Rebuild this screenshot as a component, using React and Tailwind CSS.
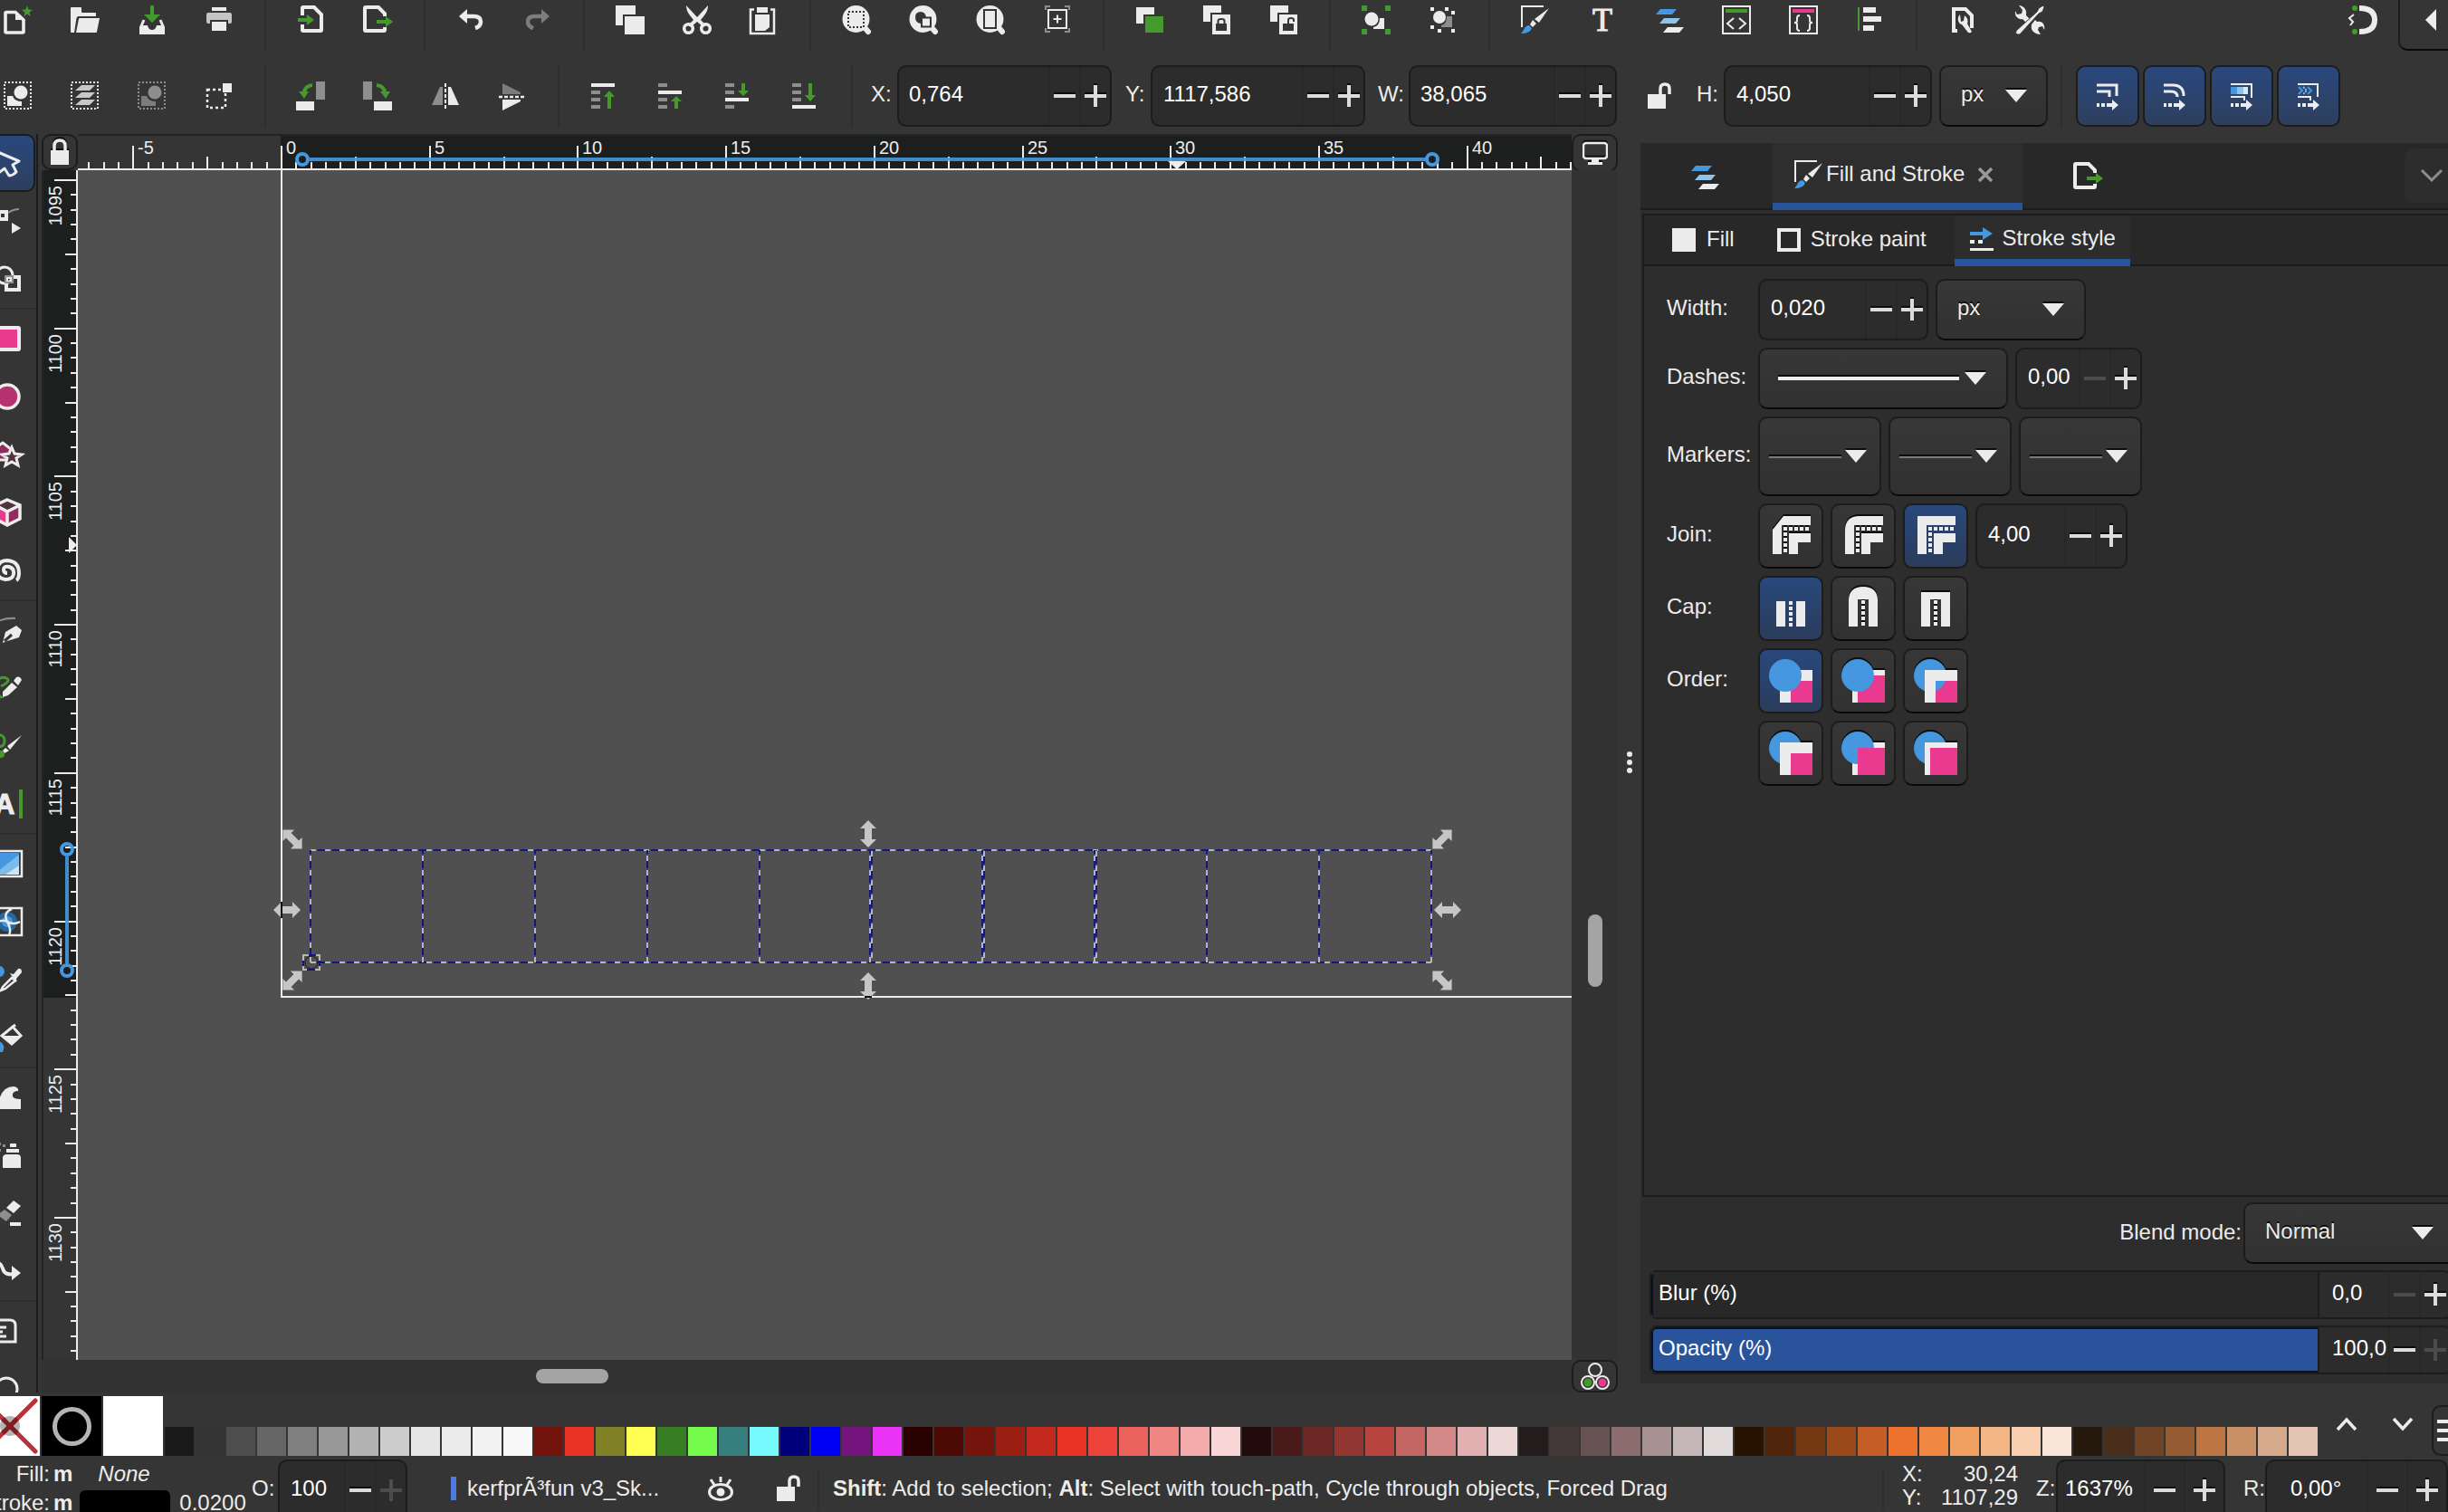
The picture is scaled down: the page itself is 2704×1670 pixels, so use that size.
import React from "react";

const W = "#ececec";
const G = "#8e8e8e";
const GR = "#459a2c";
const B = "#4598e0";
const P = "#ea3a8f";
const BG = "#353535";

function Svg({ children, size = "size-8", box = 32 }) {
  return (
    <svg viewBox={`0 0 ${box} ${box}`} className={`${size} shrink-0 overflow-visible`} fill="none" aria-hidden="true">
      {children}
    </svg>
  );
}

const magnifier = (
  <>
    <circle cx="15.5" cy="15" r="15" fill={W} />
    <path d="M23 22L29 29" stroke={W} strokeWidth="6" strokeLinecap="round" />
  </>
);

const strip = (y, arrow) =>
  [2, 10, 18, 26]
    .map((v) => <rect key={v} x="1" y={v} width={v === y ? 26 : 10} height="4" fill={v === y ? W : G} />)
    .concat(<path key="a" d={arrow} fill={GR} />);

const icons = {
  new: (
    <>
      <path d="M2 8.5q0-1 1-1H13L22 16V29q0 1-1 1H3q-1 0-1-1z" stroke={W} strokeWidth="3.6" />
      <path d="M13 7v9h10z" fill={W} />
      <path d="M26 0l1.6 4.6 4.4.2-3.5 3 1.2 4.4-3.7-2.6-3.7 2.6 1.2-4.4-3.5-3 4.4-.2z" fill={GR} />
    </>
  ),
  open: (
    <>
      <path d="M0 3q0-1 1-1h10q1 0 1 1v4q0 1 1 1h14q1 0 1 1v3H9q-2 0-2.5 2L4 30H1q-1 0-1-1z" fill={W} />
      <path d="M9 15q0-1 1-1h22l-3 15q0 1-1 1H6z" fill={W} />
    </>
  ),
  save: (
    <>
      <path d="M14 0h4v10h7l-9 9-9-9h7z" fill={GR} />
      <path d="M7 16L3.5 24V30.5H28.5V24L25 16" stroke={W} strokeWidth="3" />
      <path d="M3 22h8q1 5 5 5t5-5h8v9H3z" fill={W} />
    </>
  ),
  print: (
    <>
      <path d="M8 2h16v4H8zM8 18h16v10H8z" fill={W} />
      <path d="M2 10q0-2 2-2h24q2 0 2 2v8q0 2-2 2h-2v-4H6v4H4q-2 0-2-2z" fill="#c4c4c4" />
    </>
  ),
  import: (
    <>
      <path d="M6 11V3q0-1 1-1h12l8 8v17q0 1-1 1H7q-1 0-1-1v-6" stroke={W} strokeWidth="4" />
      <path d="M1 14h10V10l8 6-8 6v-4H1z" fill={GR} />
    </>
  ),
  export: (
    <>
      <path d="M23 12V9l-7-7H2Q1 2 1 3v24q0 1 1 1h20q1 0 1-1v-3" stroke={W} strokeWidth="4" />
      <path d="M14 16h10v-4l8 6-8 6v-4H14z" fill={GR} />
    </>
  ),
  undo: (
    <>
      <path d="M3 12l9-8v16z" fill={W} />
      <path d="M11 12h8q8 0 8 6 0 5-6 7" stroke={W} strokeWidth="4.5" />
    </>
  ),
  redo: (
    <>
      <path d="M29 12l-9-8v16z" fill="#7d7d7d" />
      <path d="M21 12h-8q-8 0-8 6 0 5 6 7" stroke="#7d7d7d" strokeWidth="4.5" />
    </>
  ),
  copy: (
    <>
      <path d="M0 0h22v10H8v12H0z" fill={W} />
      <path d="M10 12h22v20H10z" fill={W} />
    </>
  ),
  cut: (
    <>
      <path d="M4 0q0 6 4 11l4 5-6 6 3 2 7-6 7 6 3-2-6-6 4-5q4-5 4-11L16 13z" fill={W} />
      <circle cx="6.5" cy="25.5" r="4.8" stroke={W} strokeWidth="3.5" />
      <circle cx="25.5" cy="25.5" r="4.8" stroke={W} strokeWidth="3.5" />
    </>
  ),
  paste: (
    <>
      <path d="M5 4.5H1V31H27V4.5H23" stroke={W} strokeWidth="2.5" />
      <path d="M8 2h12v6H8zM6 10h16v14l-5 4H6z" fill={W} />
    </>
  ),
  zoomSel: (
    <>
      {magnifier}
      <rect x="7" y="7" width="17" height="17" stroke={BG} strokeWidth="2" strokeDasharray="2 2" />
    </>
  ),
  zoomDraw: (
    <>
      {magnifier}
      <path d="M13 20q-6-1-6-7t6-6q5 0 6 6h-5v7z" fill={BG} />
      <path d="M14 13.500h10v10H14z" fill={W} stroke={BG} strokeWidth="2" />
    </>
  ),
  zoomPage: (
    <>
      {magnifier}
      <path d="M9 5h13v20H9z" stroke={BG} strokeWidth="2" />
    </>
  ),
  zoomCenter: (
    <>
      <path d="M3 5V1h5M24 1h5v4M29 25v4h-5M8 29H3v-4" stroke={G} strokeWidth="2" />
      <path d="M6 5h20v20H6zM16 10.500v9M11.500 15h9" stroke={W} strokeWidth="2" />
    </>
  ),
  dup: (
    <>
      <path d="M1 2h20v8H9v10H1z" fill={W} />
      <path d="M11 12h20v18H11z" fill={GR} />
    </>
  ),
  clone: (
    <>
      <path d="M1 0h20v8H9v10H1zM11 10h20v22H11z" fill={W} />
      <path d="M15 20h12v8H15z" fill={BG} />
      <path d="M17.500 20v-3q0-2 3.500-2t3.500 2v3" stroke={BG} strokeWidth="2" />
    </>
  ),
  unclone: (
    <>
      <path d="M1 0h20v8H9v10H1zM11 10h20v22H11z" fill={W} />
      <path d="M15 20h12v8H15z" fill={BG} />
      <path d="M21 20v-4q0-2 3-2t3 2v2" stroke={BG} strokeWidth="2" />
    </>
  ),
  group: (
    <>
      <path d="M0 0h6v6H0zM26 0h6v6h-6zM0 26h6v6H0zM26 26h6v6h-6z" fill={GR} />
      <circle cx="11" cy="15" r="7.5" fill={W} />
      <path d="M20 14h5v12H13v-2q7-1 7-10z" fill={W} />
    </>
  ),
  ungroup: (
    <>
      <path d="M2 2h4v4H2zM18 2h4v4h-4zM2 22h4v4H2zM25 6h4v4h-4zM25 26h4v4h-4zM10 26h4v4h-4z" fill={W} />
      <circle cx="12" cy="13" r="7" fill={W} />
      <path d="M20 12h6v12H14v-2q6-1 6-10z" fill={G} />
    </>
  ),
  brush: (
    <>
      <path d="M1 24V1h24" stroke={W} strokeWidth="2" />
      <path d="M13 16l4 4-4 4-3-3z" fill={W} />
      <path d="M31 3L20 19l-5-4z" fill={W} />
      <path d="M9 22l3 3q-2 6-12 6 3-3 4-6 2-3 5-3z" fill={B} />
    </>
  ),
  text: (
    <text x="16" y="28" textAnchor="middle" fill={W} stroke={W} strokeWidth="1" fontSize="36" fontFamily="Liberation Serif, serif">
      T
    </text>
  ),
  layers: (
    <>
      <path d="M6 4h18l-5 6H1z" fill={B} />
      <path d="M10 14h18l-5 6H5z" fill="#8fc3ea" />
      <path d="M14 24h18l-5 6H9z" fill={W} />
    </>
  ),
  xml: (
    <>
      <path d="M1 1h30v30H1z" stroke={W} strokeWidth="2" />
      <path d="M4 4h24v4H4z" fill={GR} />
      <path d="M13 14l-7 6 7 6M19 14l7 6-7 6" stroke={W} strokeWidth="2" />
    </>
  ),
  css: (
    <>
      <path d="M1 1h30v30H1z" stroke={W} strokeWidth="2" />
      <path d="M4 4h24v4H4z" fill={P} />
      <path d="M12 11q-3 0-3 3v3q0 2-3 2 3 0 3 2v4q0 3 3 3M20 11q3 0 3 3v3q0 2 3 2-3 0-3 2v4q0 3-3 3" stroke={W} strokeWidth="2" />
    </>
  ),
  align: (
    <>
      <path d="M2 2h2v26H2z" fill={GR} />
      <path d="M8 2h14v6H8zM8 12h20v6H8zM8 22h12v6H8z" fill={W} />
    </>
  ),
  docPrefs: (
    <>
      <path d="M10 28H6V4h13l7 7v14" stroke={W} strokeWidth="4" />
      <path d="M13 10q-4 4-1 9 1 2 3 2l7 9q3 1 4-1l-5-9q2-5-3-9l-1 6-3 1z" fill={W} />
    </>
  ),
  prefs: (
    <>
      <path d="M4 0l4 5-1 4-5 1-2-4q-1 5 3 8 3 2 5 1l4 4 4-4-4-4q1-4-1-7Q8 0 4 0zM18 21q-1 5 2 8 3 3 8 3l-3-5 1-3 4-1 2 4q1-5-2-8-3-2-6-1l-2-2z" fill={W} />
      <path d="M31 0l-5 3-2 4L1 28q-1 3 1 4h3L26 9l4-2 2-5z" fill={W} stroke={BG} strokeWidth="1" />
    </>
  ),
  snap: (
    <>
      <path d="M14 3q17 0 17 13T14 29" stroke={W} strokeWidth="6" />
      <circle cx="9" cy="3" r="3" fill={GR} />
      <circle cx="9" cy="29" r="3" fill={GR} />
      <path d="M8 10l-5 4 4 4-3 4" stroke={W} strokeWidth="2" />
    </>
  ),
  selAll: (
    <>
      <path d="M1 1h29v29H1z" stroke={W} strokeWidth="2" strokeDasharray="2 2" />
      <circle cx="19" cy="12" r="7.5" fill={W} />
      <path d="M4 16h6q2 6 10 6v5H4z" fill={W} />
    </>
  ),
  selLayers: (
    <>
      <path d="M1 1h29v29H1z" stroke={W} strokeWidth="2" strokeDasharray="2 2" />
      <path d="M12 4h15l-6 6H5zM12 12h15l-6 6H5zM12 20h15l-6 6H5z" fill="#c8c8c8" />
    </>
  ),
  deselect: (
    <>
      <path d="M1 1h29v29H1z" stroke={G} strokeWidth="2" strokeDasharray="2 2" />
      <circle cx="19" cy="12" r="7.5" fill={G} />
      <path d="M4 16h6q2 6 10 6v5H4z" fill="#7c7c7c" />
    </>
  ),
  touch: (
    <>
      <path d="M3 9h20v20H3z" stroke={W} strokeWidth="2.5" strokeDasharray="3 3" />
      <path d="M20 2h10v10H20z" fill={W} />
    </>
  ),
  ccw: (
    <>
      <path d="M21 0h10v20H21z" fill={G} />
      <path d="M-1 22h20v10H-1z" fill={W} />
      <path d="M17 4q-9 1-9 9" stroke={GR} strokeWidth="4" />
      <path d="M2 11h11l-5 8z" fill={GR} />
    </>
  ),
  cw: (
    <>
      <path d="M-1 0h10v20H-1z" fill={G} />
      <path d="M11 22h20v10H11z" fill={W} />
      <path d="M14 4q9 1 9 9" stroke={GR} strokeWidth="4" />
      <path d="M18 11h11l-5 8z" fill={GR} />
    </>
  ),
  flipH: (
    <>
      <path d="M1 26L10 6h3v20z" fill={G} />
      <path d="M16 2v28" stroke={W} strokeWidth="2" strokeDasharray="4 2" />
      <path d="M19 6h3l9 20H19z" fill={W} />
    </>
  ),
  flipV: (
    <>
      <path d="M5 2l20 10v2H5z" fill="#7c7c7c" />
      <path d="M1 17h28" stroke={W} strokeWidth="2.5" strokeDasharray="4 2" />
      <path d="M5 20h20v2L5 32z" fill={W} />
    </>
  ),
  toTop: strip(2, "M21 10l6 7h-4v13h-4V17h-4z"),
  raise: strip(10, "M21 16l6 6h-4v8h-4v-8h-4z"),
  lower: strip(18, "M19 2h4v8h4l-6 6-6-6h4z"),
  toBottom: strip(26, "M19 2h4v13h4l-6 7-6-7h4z"),
  unlock: (
    <>
      <path d="M3 14h20v16H3z" fill={W} />
      <path d="M17 14V8q0-5 5-5t5 5v6" stroke={W} strokeWidth="3.5" />
    </>
  ),
};

const movers = {
  stroke: <path d="M4 4h22v12M4 11h14v6" stroke={W} strokeWidth="3" />,
  corner: <path d="M4 4h10q12 0 12 12M4 11h8q7 0 7 6" stroke={W} strokeWidth="3" />,
  gradient: (
    <>
      <path d="M4 3h23v15M4 17h15v4" stroke={W} strokeWidth="2" />
      <path d="M4 6h7v8H4z" fill={B} />
      <path d="M11 6h7v8h-7z" fill="#8fc3ea" />
      <path d="M18 6h5v8h-5z" fill="#d5e8f6" />
    </>
  ),
  pattern: (
    <>
      <path d="M4 3h22v14M4 17h14v4" stroke={W} strokeWidth="2" />
      <path d="M5 6l4 4-4 4M15 6l4 4-4 4" stroke={B} strokeWidth="2" />
      <path d="M10 6l4 4-4 4" stroke="#8fc3ea" strokeWidth="2" strokeDasharray="2 1" />
    </>
  ),
};

const toolIcons = {
  select: <path d="M2 2L30 14l-7 4 4 8q-4 4-8 4l-5-8-8 6z" stroke={W} strokeWidth="3" strokeLinejoin="round" />,
  node: (
    <>
      <path d="M18 7q6-4 12-4" stroke={G} strokeWidth="2" />
      <path d="M8 6h8v8H8z" stroke={W} strokeWidth="4" />
      <path d="M22 18l10 6-10 6z" fill={W} />
    </>
  ),
  shape: (
    <>
      <circle cx="14" cy="12" r="9" stroke={W} strokeWidth="3" />
      <path d="M16 14h14v14H16z" stroke={W} strokeWidth="4" />
      <path d="M15 13h8v7h-8z" stroke={G} strokeWidth="2" />
    </>
  ),
  rect: <rect x="-4" y="4" width="34" height="24" rx="1" fill={P} stroke={W} strokeWidth="4" />,
  ellipse: <circle cx="17" cy="16" r="13" fill="#b5316f" stroke={W} strokeWidth="3.5" />,
  star: (
    <>
      <path d="M12 3l9 7-4 12H2V10z" fill="#8f2d60" stroke={W} strokeWidth="3" />
      <path d="M22 8l3 7 8 1-6 4 2 8-7-4-7 4 2-8-6-4 8-1z" fill="#553041" stroke={W} strokeWidth="3" />
    </>
  ),
  cube: (
    <>
      <path d="M17 2l14 6v15l-14 7L4 23V8z" fill="#553041" />
      <path d="M4 8l13 7v15L4 23z" fill={P} />
      <path d="M31 8l-14 7v15l14-7z" fill="#8f2d60" />
      <path d="M17 2l14 6v15l-14 7L4 23V8zM4 8l13 7 14-7M17 15v15" stroke={W} strokeWidth="3.5" />
    </>
  ),
  spiral: <path d="M17 19q-4 0-4-4t6-3q6 2 5 8t-9 6q-10-1-9-11T17 5q13 1 13 14 0 6-3 8" stroke={W} strokeWidth="4" />,
  pen: (
    <>
      <path d="M2 9Q12 2 26 3" stroke={G} strokeWidth="2" />
      <path d="M12 30l3-12 12-7 6 5-3 8-13 4z" fill={W} />
      <path d="M14 28l8-7" stroke={BG} strokeWidth="3" />
    </>
  ),
  pencil: (
    <>
      <path d="M4 10q6-8 12-5t-6 9" stroke={GR} strokeWidth="3" />
      <path d="M12 20l10-10 6 5-10 9-6 2zM24 8l3-4q4-2 6 3l-4 6z" fill={W} />
      <path d="M4 28l4-6 5 5z" fill={GR} />
    </>
  ),
  calligraphy: (
    <>
      <path d="M2 4q12-2 12 6t-8 6" stroke={GR} strokeWidth="3" />
      <path d="M33 4L17 16l3 4zM15 18l4 3-5 3-2-3z" fill={W} />
      <circle cx="10" cy="25" r="4" fill={GR} />
    </>
  ),
  text: (
    <>
      <text x="3" y="27" fill={W} stroke={W} strokeWidth="1" fontSize="31" fontWeight="bold" fontFamily="Liberation Sans, sans-serif">
        A
      </text>
      <path d="M30 0h4v32h-4z" fill={GR} />
    </>
  ),
  gradient: (
    <>
      <path d="M-4 2h37v28H-4z" stroke={W} strokeWidth="2.5" />
      <path d="M-2 4h32v24H-2z" fill={B} />
      <path d="M30 6v22H2z" fill="#7dbbe9" />
      <path d="M30 18v10H15z" fill="#cfe4f4" />
    </>
  ),
  mesh: (
    <>
      <path d="M-4 1h37v30H-4z" stroke={W} strokeWidth="2.5" />
      <circle cx="17" cy="16" r="11" fill="#27679f" />
      <circle cx="17" cy="16" r="6" fill={B} />
      <path d="M22 2q-10 4-5 14t2 14M2 20q8-8 15-4t14 0" stroke={W} strokeWidth="2.5" />
    </>
  ),
  dropper: (
    <>
      <circle cx="8" cy="7" r="6" fill={B} />
      <path d="M10 28l2-4 10-10 4 3-11 9z" stroke={W} strokeWidth="2.5" />
      <path d="M20 9l4 1 5-6q4-1 4 4l-6 7v4z" fill={W} />
    </>
  ),
  bucket: (
    <>
      <path d="M11 14L23 4l9 10-10 9zM23 4l3-2" stroke={W} strokeWidth="3" />
      <path d="M11 14h21l-10 10z" fill={W} />
      <path d="M8 20q8 4 4 12H2z" fill={B} />
    </>
  ),
  tweak: <path d="M-4 29q8-1 12-10 4-15 16-15 6 1 5 5-7 0-6 6 1 3 9 3v11z" fill={W} />,
  spray: (
    <>
      <path d="M20 3h7v4h-7zM16 9h14v4H16zM12 18q1-3 4-3h12q4 0 4 4v11H12z" fill={W} />
      <path d="M7 2h3v3H7zM12 4h3v3h-3zM7 9h3v3H7zM2 5h3v3H2z" fill={G} />
    </>
  ),
  eraser: (
    <>
      <path d="M16 10l8-8 8 6-8 8z" fill={W} />
      <path d="M14 12l8 6-6 7-10-7z" fill={G} />
      <path d="M20 26h12v4H20z" fill={W} />
    </>
  ),
  connector: (
    <>
      <path d="M-2 5q12 0 14 8t12 6" stroke={W} strokeWidth="4" />
      <path d="M22 10l10 8-10 8z" fill={W} />
    </>
  ),
  pages: <path d="M-2 4h22q6 0 6 6v18H-2M-2 12h18M-2 17h14M-2 22h18" stroke={W} strokeWidth="3" />,
  zoom: <circle cx="16" cy="16" r="12" stroke={W} strokeWidth="3" />,
};

const Minus = ({ off }) => (
  <svg viewBox="0 0 24 24" className={off ? "size-6 shrink-0" : "size-6 shrink-0 drop-shadow-[0_-2px_0_#0c0c0c]"} aria-hidden="true">
    <path d="M0 10h24v4H0z" fill={off ? "#4c4c4c" : "#dcdcdc"} />
  </svg>
);
const Plus = ({ off }) => (
  <svg viewBox="0 0 24 24" className={off ? "size-6 shrink-0" : "size-6 shrink-0 drop-shadow-[0_-2px_0_#0c0c0c]"} aria-hidden="true">
    <path d="M0 10h10V0h4v10h10v4H14v10h-4V14H0z" fill={off ? "#4c4c4c" : "#dcdcdc"} />
  </svg>
);
const Down = () => (
  <svg viewBox="0 0 24 14" className="h-[14px] w-6 shrink-0 drop-shadow-[0_-2px_0_#0c0c0c]" aria-hidden="true">
    <path d="M0 0h24L12 14z" fill={W} />
  </svg>
);

function Spin({ id, label, value, className, pad = "pl-3", step = "w-[34px]", minusOff, plusOff }) {
  return (
    <div className={`flex shrink-0 rounded-[10px] border-2 border-[#1c1c1c] bg-[#2c2c2c] ${className}`}>
      <input id={id} aria-label={label} defaultValue={value} className={`min-w-0 flex-1 bg-transparent pb-1 text-white outline-none ${pad}`} />
      <button aria-label={`Decrease ${label}`} className={`flex shrink-0 items-center justify-center border-l-2 border-[#282828] ${step}`}>
        <Minus off={minusOff} />
      </button>
      <button aria-label={`Increase ${label}`} className={`flex shrink-0 items-center justify-center border-l-2 border-[#282828] ${step}`}>
        <Plus off={plusOff} />
      </button>
    </div>
  );
}

function Select({ label, value, className, pad, arrow, id }) {
  return (
    <div className={`relative shrink-0 ${className}`}>
      <select
        id={id}
        aria-label={label}
        className={`h-full w-full appearance-none rounded-[10px] border-2 border-[#1c1c1c] border-b-[#0a0a0a] bg-linear-to-b from-[#373737] to-[#313131] pb-1 text-[#ececec] outline-none text-shadow-[0_-2px_0_#0c0c0c] ${pad}`}
      >
        <option>{value}</option>
      </select>
      <span className={`pointer-events-none absolute inset-y-0 flex items-center ${arrow}`}>
        <Down />
      </span>
    </div>
  );
}

const Sep = () => <div className="mx-[13px] w-[2px] shrink-0 self-stretch bg-[#2e2e2e]" />;

const IconRow = ({ groups }) =>
  groups.map((g, i) => (
    <React.Fragment key={i}>
      {g.map((n) => (
        <button key={n} aria-label={n} className="flex h-full w-[74px] shrink-0 items-center justify-center">
          <Svg>{icons[n]}</Svg>
        </button>
      ))}
      <Sep />
    </React.Fragment>
  ));

const DARK = "#1c1f1e";
const UNIT = 32.74;

function tickLen(i) {
  return i % 10 === 0 ? 26 : i % 5 === 0 ? 14 : 8;
}

function HRuler() {
  const ticks = [];
  for (let i = -13; i < 88; i++) ticks.push(i);
  const x0 = 225;
  return (
    <svg className="h-10 w-full" role="img" aria-label="Horizontal ruler">
      <rect width="100%" height="40" fill={BG} />
      <rect x="224" width="100%" height="40" fill={DARK} />
      <rect width="100%" height="2" fill="#242424" />
      {ticks.map((i) => {
        const x = Math.round(x0 + (i * UNIT) / 2);
        return <rect key={i} x={x - 1} y={40 - tickLen(i) - 1} width="2" height={tickLen(i)} fill={W} />;
      })}
      {[-5, 0, 5, 10, 15, 20, 25, 30, 35, 40].map((n) => (
        <text key={n} x={Math.round(x0 + n * UNIT) + 5} y="22" fontSize="20" fill={W}>
          {n}
        </text>
      ))}
      <path d="M256 28H1490" stroke={B} strokeWidth="4" opacity="0.9" />
      <circle cx="248" cy="28" r="6" stroke={B} strokeWidth="4" fill="none" />
      <circle cx="1496" cy="28" r="6" stroke={B} strokeWidth="4" fill="none" />
      <path d="M1204 30h20l-10 9z" fill={W} />
      <rect y="38" width="100%" height="2" fill={W} />
    </svg>
  );
}

function VRuler() {
  const ticks = [];
  for (let i = 0; i < 80; i++) ticks.push(i);
  const y0 = 11;
  return (
    <svg className="h-full w-10 shrink-0" role="img" aria-label="Vertical ruler">
      <rect width="40" height="100%" fill={BG} />
      <rect width="40" height="914" fill={DARK} />
      <rect width="2" height="100%" fill="#242424" />
      {ticks.map((i) => {
        const y = Math.round(y0 + i * 16.37);
        return <rect key={i} x={40 - tickLen(i)} y={y - 1} width={tickLen(i)} height="2" fill={W} />;
      })}
      {[1095, 1100, 1105, 1110, 1115, 1120, 1125, 1130].map((n, k) => (
        <text key={n} transform={`translate(22 ${Math.round(y0 + k * 163.7) + 6}) rotate(-90)`} textAnchor="end" fontSize="20" fill={W}>
          {n}
        </text>
      ))}
      <path d="M28 758V876" stroke={B} strokeWidth="4" opacity="0.9" />
      <circle cx="28" cy="750" r="6" stroke={B} strokeWidth="4" fill="none" />
      <circle cx="28" cy="884" r="6" stroke={B} strokeWidth="4" fill="none" />
      <path d="M30 405v18l9-9z" fill={W} />
      <rect x="38" width="2" height="100%" fill={W} />
    </svg>
  );
}

const H_ARROW = "M-15 0L-6 -9V-4H6V-9L15 0L6 9V4H-6V9Z";

function Dash({ d }) {
  return (
    <>
      <path d={d} stroke="#15158a" strokeWidth="2" />
      <path d={d} stroke="#3c3cae" strokeWidth="2" strokeDasharray="2 14" strokeDashoffset="-6" />
      <path d={d} stroke="#b8b8b4" strokeWidth="2" strokeDasharray="6 10" />
    </>
  );
}

function Canvas() {
  return (
    <svg className="h-full min-w-0 flex-1 bg-[#505050]" fill="none" role="img" aria-label="Drawing canvas">
      <path d="M225 0V913H4000" stroke={W} strokeWidth="2" />
      <Dash d="M257 751H1495" />
      <Dash d="M257 875H1495" />
      {[257, 381, 505, 629, 753, 875, 999, 1123, 1247, 1371, 1495].map((x) => (
        <Dash key={x} d={`M${x} 875V751`} />
      ))}
      {[877, 1001, 1125].map((x) => (
        <Dash key={x} d={`M${x} 870V751`} />
      ))}
      <rect x="249" y="867" width="18" height="16" stroke="#15158a" strokeWidth="2" />
      <path d="M249 873v-6h6M263 867h4v6M267 879v4h-5M253 883h-4v-4" stroke="#b8b8b4" strokeWidth="2" />
      <circle cx="258" cy="875" r="7" stroke="#1a1a1a" />
      <g fill="#c6c6c6">
        <path d={H_ARROW} transform="translate(237 739) rotate(45)" />
        <path d={H_ARROW} transform="translate(1507 739) rotate(-45)" />
        <path d={H_ARROW} transform="translate(237 895) rotate(-45)" />
        <path d={H_ARROW} transform="translate(1507 895) rotate(45)" />
        <path d={H_ARROW} transform="translate(231 817)" />
        <path d={H_ARROW} transform="translate(1513 817)" />
        <path d={H_ARROW} transform="translate(873 733) rotate(90)" />
        <path d={H_ARROW} transform="translate(873 901) rotate(90)" />
      </g>
      <path d="M225 808v18M869 913h8" stroke="#111" strokeWidth="2" />
    </svg>
  );
}

const tools = [
  ["select", "node", "shape"],
  ["rect", "ellipse", "star", "cube", "spiral"],
  ["pen", "pencil", "calligraphy", "text"],
  ["gradient", "mesh", "dropper", "bucket"],
  ["tweak", "spray", "eraser", "connector"],
  ["pages", "zoom"],
];

const swatches =
  "1a1a1a 333333 4d4d4d 666666 808080 999999 b3b3b3 cccccc e6e6e6 ececec f2f2f2 f9f9f9 72140d ea3323 808026 ffff54 377d22 75fb4c 377e7f 75fbfd 00007b 0000f5 75147c ea33f7 280000 4d0a05 75140c 9b1f12 c2281b ea3323 ec443b ec625d f08784 f4abac f9d6d6 230b0b 481a19 6d2725 923632 b8443f c46763 d28988 e0b1b0 edd8d8 221c1c 443737 675352 8c6e6f a89192 c5b7b7 e1dbdb 281303 4e250b 753813 9b4a1b c45d26 ed722e f08742 f2a062 f5b685 f8ceb0 fae6d8 26190e 4a2e1c 704527 955c34 bd7544 c99065 d6ab8d e3c7b4".split(
    " "
  );

const dots = (pts) => pts.map(([x, y]) => <rect key={`${x}-${y}`} x={x} y={y} width="4" height="4" fill={W} />);
const joinDots = dots([[16, 14], [22, 14], [28, 14], [34, 14], [40, 14], [16, 20], [16, 26], [16, 32], [16, 38]]);
const capDots = dots([[22, 15], [22, 21], [22, 27], [22, 33], [22, 39]]);
const innerL = <path d="M22 21h24v10H32v13H22z" fill={W} />;

const joins = [
  <>
    <path d="M4 44V17L16 2h30v10H14v32z" fill={W} />
    {innerL}
    {joinDots}
  </>,
  <>
    <path d="M4 44V18Q4 2 20 2h26v10H14v32z" fill={W} />
    {innerL}
    {joinDots}
  </>,
  <>
    <path d="M4 44V2h42v10H14v32z" fill={W} />
    {innerL}
    {joinDots}
  </>,
];
const caps = [
  <>
    <path d="M8 16h10v28H8zM30 16h10v28H30z" fill={W} />
    {dots([[22, 16], [22, 22], [22, 28], [22, 34], [22, 40]])}
  </>,
  <>
    <path d="M8 44V14Q9 0 24 0t16 14v30H30V14H18v30z" fill={W} />
    {capDots}
  </>,
  <>
    <path d="M8 44V6h32v38H30V14H18v30z" fill={W} />
    {capDots}
  </>,
];
const disc = <circle cx="18" cy="18" r="18" fill={B} />;
const white = <path d="M12 12h36v36H12z" fill={W} />;
const pinkS = <path d="M24 24h24v24H24z" fill={P} />;
const pinkL = <path d="M18 18h30v30H18z" fill={P} />;
const orders = [
  <>{white}{pinkS}{disc}</>,
  <>{white}{pinkL}{disc}</>,
  <>{pinkS}{disc}<path d="M12 12h36v12H24v24H12z" fill={W} /></>,
  <>{disc}{white}{pinkS}</>,
  <>{white}{disc}{pinkL}</>,
  <>{disc}{white}{pinkL}</>,
];

function Tile({ on, label, children }) {
  return (
    <button
      aria-label={label}
      aria-pressed={!!on}
      className={
        "flex size-[72px] shrink-0 items-center justify-center rounded-[10px] border-2 border-[#1c1c1c] bg-linear-to-b " +
        (on ? "from-[#29487d] to-[#2a3c5a]" : "border-b-[#0a0a0a] from-[#373737] to-[#313131]")
      }
    >
      <svg viewBox="0 0 48 48" className={on ? "size-12" : "size-12 drop-shadow-[0_-2px_0_#0c0c0c]"} fill="none" aria-hidden="true">
        {children}
      </svg>
    </button>
  );
}

const FieldLabel = ({ children, htmlFor }) => (
  <label htmlFor={htmlFor} className="w-[93px] shrink-0 self-center whitespace-nowrap pb-1">
    {children}
  </label>
);

function SliderRow({ id, label, value, number, minusOff, plusOff }) {
  return (
    <div className="-mr-1 flex h-[54px] rounded-lg border-2 border-[#1c1c1c] bg-[#2c2c2c]">
      <div className="relative min-w-0 flex-1 border-r-2 border-[#1c1c1c] bg-[#282828]">
        <input
          id={id}
          type="range"
          min="0"
          max="100"
          defaultValue={value}
          className="block h-full w-full appearance-none rounded-l-md border-2 border-r-0 [&::-webkit-slider-thumb]:appearance-none [&::-webkit-slider-thumb]:opacity-0"
          style={{ background: `linear-gradient(to right, #29539b ${value}%, #282828 ${value}%)`, borderColor: value ? "#0a1020" : "#282828", borderLeftColor: "#0a1020" }}
        />
        <label htmlFor={id} className="pointer-events-none absolute inset-y-0 left-2 flex items-center pb-1 text-white">
          {label}
        </label>
      </div>
      <input aria-label={`${label} value`} defaultValue={number} className="w-[76px] bg-transparent pb-1 pl-[14px] text-white outline-none" />
      <button aria-label={`Decrease ${label}`} className="flex w-[34px] items-center justify-center border-l-2 border-[#282828]">
        <Minus off={minusOff} />
      </button>
      <button aria-label={`Increase ${label}`} className="flex w-[34px] items-center justify-center border-l-2 border-[#282828]">
        <Plus off={plusOff} />
      </button>
    </div>
  );
}

const Marker = ({ label }) => (
  <button aria-label={label} className="flex h-[88px] w-[136px] shrink-0 items-center justify-start gap-1 rounded-[10px] border-2 border-[#1c1c1c] border-b-[#0a0a0a] bg-linear-to-b from-[#373737] to-[#313131] pl-[10px]">
    <span className="h-1 w-20 border-t-2 border-b-2 border-t-[#0c0c0c] border-b-[#7d7d7d]" />
    <Down />
  </button>
);

function Panel() {
  return (
    <aside className="mt-[10px] mb-[10px] flex w-[892px] shrink-0 flex-col overflow-hidden bg-[#2d2d2d]">
      <div className="flex h-[74px] shrink-0 bg-[#282828] shadow-[inset_0_-2px_0_#1c1c1c]">
        <button aria-label="Layers and Objects" className="flex w-[146px] items-center justify-center pr-1">
          <Svg>{icons.layers}</Svg>
        </button>
        <div className="flex w-[276px] items-center border-b-8 border-[#29539b] bg-[#2e2e2e] pl-6">
          <button className="flex items-center gap-[3px] pt-1 whitespace-nowrap">
            <Svg>{icons.brush}</Svg>
            <span className="pb-[2px]">Fill and Stroke</span>
          </button>
          <button aria-label="Close tab" className="ml-[14px] pt-1">
            <svg viewBox="0 0 18 18" className="size-[18px]" aria-hidden="true">
              <path d="M2 2l14 14M16 2L2 16" stroke="#9a9a9a" strokeWidth="3.5" />
            </svg>
          </button>
        </div>
        <button aria-label="Export" className="flex w-[146px] items-center justify-center">
          <Svg>{icons.export}</Svg>
        </button>
        <button aria-label="Dialog menu" className="mt-[6px] ml-auto flex h-[60px] w-12 items-center rounded-l-[10px] bg-[#2d2d2d] pl-[18px]">
          <svg viewBox="0 0 24 16" className="h-4 w-6" fill="none" aria-hidden="true">
            <path d="M1 2l11 11L23 2" stroke="#8e8e8e" strokeWidth="3" />
          </svg>
        </button>
      </div>
      <div className="mt-1 ml-[2px] flex min-h-0 flex-1 flex-col border-b-2 border-l-2 border-[#1c1c1c]">
        <div className="flex h-[58px] shrink-0 border-t-2 border-[#1c1c1c] bg-[#282828]">
          <div className="flex min-w-0 flex-1 border-b-2 border-[#1c1c1c] pl-[31px]">
            <button className="flex items-center gap-3">
              <span className="size-[26px] bg-[#ececec]" />
              <span className="pb-[2px]">Fill</span>
            </button>
            <button className="ml-[47px] flex items-center gap-[11px] whitespace-nowrap">
              <span className="size-[26px] border-4 border-[#ececec]" />
              <span className="pb-[2px]">Stroke paint</span>
            </button>
            <button className="-mb-[2px] ml-[31px] flex w-[194px] items-center justify-center gap-[9px] border-b-8 border-[#29539b] bg-[#2d2d2d] pt-1 whitespace-nowrap">
              <svg viewBox="0 0 28 28" className="size-7" fill="none" aria-hidden="true">
                <path d="M1 6h14V1l11 7-11 7v-5H1z" fill={B} />
                <path d="M1 15h5v4H1zM10 15h5v4h-5zM1 24h26v3H1z" fill={W} />
              </svg>
              <span className="pb-[2px]">Stroke style</span>
            </button>
          </div>
        </div>
        <div className="flex flex-col gap-2 pt-[14px] pl-[25px]">
          <div className="flex gap-2">
            <FieldLabel htmlFor="sw">Width:</FieldLabel>
            <Spin id="sw" label="Width" value="0,020" className="h-[68px] w-[188px]" />
            <Select label="Width unit" value="px" className="h-[68px] w-[166px]" pad="pl-[22px]" arrow="right-6" />
          </div>
          <div className="flex gap-2">
            <FieldLabel htmlFor="dash">Dashes:</FieldLabel>
            <button id="dash" aria-label="Dash pattern" className="flex h-[68px] w-[276px] items-center gap-[6px] rounded-[10px] border-2 border-[#1c1c1c] border-b-[#0a0a0a] bg-linear-to-b from-[#373737] to-[#313131] pl-5">
              <span className="h-1 w-[200px] bg-[#ececec] shadow-[0_-2px_0_#0c0c0c]" />
              <Down />
            </button>
            <Spin label="Dash offset" value="0,00" className="h-[68px] w-[140px]" minusOff />
          </div>
          <div className="flex gap-2">
            <FieldLabel>Markers:</FieldLabel>
            <Marker label="Start marker" />
            <Marker label="Mid marker" />
            <Marker label="End marker" />
          </div>
          <div className="flex gap-2">
            <FieldLabel htmlFor="miter">Join:</FieldLabel>
            {joins.map((j, i) => (
              <Tile key={i} on={i === 2} label={["Bevel join", "Round join", "Miter join"][i]}>
                {j}
              </Tile>
            ))}
            <Spin id="miter" label="Miter limit" value="4,00" className="h-[72px] w-[168px]" />
          </div>
          <div className="flex gap-2">
            <FieldLabel>Cap:</FieldLabel>
            {caps.map((j, i) => (
              <Tile key={i} on={i === 0} label={["Butt cap", "Round cap", "Square cap"][i]}>
                {j}
              </Tile>
            ))}
          </div>
          <div className="flex gap-2">
            <div className="flex h-[72px]">
              <FieldLabel>Order:</FieldLabel>
            </div>
            <div className="grid grid-cols-3 gap-2">
              {orders.map((j, i) => (
                <Tile key={i} on={i === 0} label={`Paint order ${i + 1}`}>
                  {j}
                </Tile>
              ))}
            </div>
          </div>
        </div>
      </div>
      <div className="flex shrink-0 flex-col gap-[7px] pt-[6px] pb-[10px] pl-[10px]">
        <div className="-mr-3 flex items-center justify-end">
          <label htmlFor="blend" className="pr-[2px] pb-[2px]">Blend mode:</label>
          <Select id="blend" value="Normal" className="h-[68px] w-[238px]" pad="pl-[22px]" arrow="right-7" />
        </div>
        <SliderRow id="blur" label="Blur (%)" value={0} number="0,0" minusOff />
        <SliderRow id="opacity" label="Opacity (%)" value={100} number="100,0" plusOff />
      </div>
    </aside>
  );
}

const smallBtn = "flex items-center justify-center rounded-[10px] border-2 border-[#1c1c1c] bg-[#353535]";

export default function App() {
  return (
    <div className="flex h-screen w-full flex-col overflow-hidden bg-[#353535] font-['Liberation_Sans',Arial,sans-serif] text-[24px] leading-7 text-[#ececec]">
      <header className="shrink-0">
        <div className="-mt-3 flex h-[68px] items-center">
          <div className="-ml-[17px] flex h-full">
            <IconRow
              groups={[
                ["new", "open", "save", "print"],
                ["import", "export"],
                ["undo", "redo"],
                ["copy", "cut", "paste"],
                ["zoomSel", "zoomDraw", "zoomPage", "zoomCenter"],
                ["dup", "clone", "unclone"],
                ["group", "ungroup"],
                ["brush", "text", "layers", "xml", "css", "align"],
              ]}
            />
            <button aria-label="Document properties" className="flex w-[74px] items-center justify-center">
              <Svg>{icons.docPrefs}</Svg>
            </button>
            <button aria-label="Preferences" className="flex w-[74px] items-center justify-center">
              <Svg>{icons.prefs}</Svg>
            </button>
          </div>
          <button aria-label="Snapping" className="ml-auto flex w-[74px] items-center justify-center">
            <Svg>{icons.snap}</Svg>
          </button>
          <button aria-label="Snap options" className="-mr-3 ml-1 flex h-full w-[67px] items-center rounded-[10px] border-2 border-[#1c1c1c] border-b-[#0a0a0a] pl-7">
            <svg viewBox="0 0 12 24" className="h-6 w-3" aria-hidden="true">
              <path d="M12 0v24L0 12z" fill={W} />
            </svg>
          </button>
        </div>
        <div className="mt-4 flex h-[68px] items-center">
          <div className="-ml-[17px] flex h-full">
            <IconRow
              groups={[
                ["selAll", "selLayers", "deselect", "touch"],
                ["ccw", "cw", "flipH", "flipV"],
                ["toTop", "raise", "lower", "toBottom"],
              ]}
            />
          </div>
          <label htmlFor="fx" className="ml-[7px] w-[29px] pb-1">X:</label>
          <Spin id="fx" label="X" value="0,764" className="h-full w-[237px]" pad="pl-[11px]" />
          <label htmlFor="fy" className="ml-[15px] w-[28px] pb-1">Y:</label>
          <Spin id="fy" label="Y" value="1117,586" className="h-full w-[237px]" pad="pl-3" />
          <label htmlFor="fw" className="ml-[14px] w-[34px] pb-1">W:</label>
          <Spin id="fw" label="W" value="38,065" className="h-full w-[230px]" pad="pl-[11px]" />
          <button aria-label="Lock ratio" className="ml-[31px]">
            <Svg>{icons.unlock}</Svg>
          </button>
          <label htmlFor="fh" className="ml-[25px] w-[30px] pb-1">H:</label>
          <Spin id="fh" label="H" value="4,050" className="h-full w-[230px]" pad="pl-3" />
          <Select label="Unit" value="px" className="ml-2 h-full w-[120px]" pad="pl-[22px]" arrow="right-[23px]" />
          <div className="mr-[15px] ml-[14px] h-full w-[2px] bg-[#2e2e2e]" />
          <div className="flex h-full gap-1">
            {Object.keys(movers).map((m) => (
              <button key={m} aria-label={`Transform ${m}`} className="flex w-[70px] items-center justify-center rounded-[10px] border-2 border-[#1c1c1c] bg-linear-to-b from-[#29487d] to-[#2e3f5e]">
                <Svg>
                  {movers[m]}
                  <path d="M4 24h3v4H4zM9 24h4v4H9zM15 24h6v-4l7 6-7 6v-4h-6z" fill={W} />
                </Svg>
              </button>
            ))}
          </div>
        </div>
      </header>

      <main className="mt-2 flex min-h-0 flex-1">
        <nav className="w-[42px] shrink-0 overflow-hidden border-r-2 border-[#1c1c1c]">
          {tools.map((g, gi) => (
            <div key={gi} className={gi ? "border-t-2 border-[#2e2e2e]" : ""}>
              {g.map((t) => (
                <button
                  key={t}
                  aria-label={`${t} tool`}
                  className={
                    "-ml-[26px] flex h-16 w-[65px] items-center justify-center " +
                    (t === "select" ? "rounded-[10px] border-2 border-[#1c1c1c] bg-linear-to-b from-[#29487d] to-[#2e3f5e]" : "")
                  }
                >
                  <Svg>{toolIcons[t]}</Svg>
                </button>
              ))}
            </div>
          ))}
        </nav>

        <section className="ml-1 flex min-w-0 flex-1 flex-col">
          <div className="flex h-10 shrink-0">
            <button aria-label="Lock guides" className={`${smallBtn} w-10`}>
              <svg viewBox="0 0 20 30" className="h-[30px] w-5 drop-shadow-[0_-2px_0_#0c0c0c]" fill="none" aria-hidden="true">
                <path d="M0 13h20v16H0z" fill={W} />
                <path d="M4 13V8q0-6 6-6t6 6v5" stroke={W} strokeWidth="3.5" />
              </svg>
            </button>
            <div className="min-w-0 flex-1">
              <HRuler />
            </div>
            <button aria-label="Display mode" className={`${smallBtn} h-[42px] w-[51px]`}>
              <svg viewBox="0 0 28 26" className="h-[26px] w-7 drop-shadow-[0_-2px_0_#0c0c0c]" fill="none" aria-hidden="true">
                <rect x="1" y="2" width="26" height="17" rx="3" stroke={W} strokeWidth="2.5" />
                <path d="M10 20h8v3h4v3H6v-3h4z" fill={W} />
              </svg>
            </button>
          </div>
          <div className="flex min-h-0 flex-1">
            <VRuler />
            <Canvas />
            <div className="flex w-[51px] shrink-0 flex-col items-center bg-[#323232]">
              <div className="h-[822px]" />
              <div className="h-20 w-4 rounded-full bg-[#a4a4a2]" />
            </div>
          </div>
          <div className="flex h-9 shrink-0">
            <div className="flex min-w-0 flex-1 items-center bg-[#323232] pl-[546px]">
              <div className="h-4 w-20 rounded-full bg-[#a4a4a2]" />
            </div>
            <button aria-label="Color management" className={`${smallBtn} w-[51px]`}>
              <svg viewBox="0 0 32 30" className="h-[30px] w-8" fill="none" aria-hidden="true">
                <circle cx="16" cy="8" r="7" stroke={W} strokeWidth="2" />
                <circle cx="8" cy="22" r="7" stroke={W} strokeWidth="2" />
                <circle cx="24" cy="22" r="7" stroke={W} strokeWidth="2" />
                <circle cx="8" cy="22" r="4.5" fill={GR} />
                <circle cx="24" cy="22" r="4.5" fill={P} />
              </svg>
            </button>
          </div>
        </section>

        <div className="flex w-[25px] shrink-0 flex-col items-center justify-center gap-[3px] pb-[2px]">
          <i className="size-[6px] rounded-full bg-[#ececec]" />
          <i className="size-[6px] rounded-full bg-[#ececec]" />
          <i className="size-[6px] rounded-full bg-[#ececec]" />
        </div>

        <Panel />
      </main>

      <div className="flex h-[72px] shrink-0 items-end gap-[2px] pb-[2px]">
        <button aria-label="No paint" className="h-[66px] w-11 overflow-hidden bg-white">
          <svg viewBox="0 0 44 66" className="h-[66px] w-11" fill="none" aria-hidden="true">
            <circle cx="11" cy="33" r="11" fill="#b4b4b4" />
            <path d="M-17 5L39 61M39 5L-17 61" stroke="#b5333a" strokeWidth="5" strokeLinecap="round" />
            <path d="M3 25L19 41M19 25L3 41" stroke="#7d2026" strokeWidth="5" />
          </svg>
        </button>
        <button aria-label="Black" className="flex size-[66px] items-center justify-center bg-black">
          <span className="size-[43px] rounded-full border-[5px] border-[#b4b4b4]" />
        </button>
        <button aria-label="White" className="size-[66px] bg-white" />
        {swatches.map((c, i) => (
          <button key={i} aria-label={`#${c}`} className="h-8 w-8 shrink-0" style={{ backgroundColor: `#${c}` }} />
        ))}
        <div className="ml-auto flex h-full items-center">
          <button aria-label="Previous colors" className="mr-[38px]">
            <svg viewBox="0 0 24 16" className="h-4 w-6" fill="none" aria-hidden="true">
              <path d="M2 14L12 3l10 11" stroke={W} strokeWidth="3.5" />
            </svg>
          </button>
          <button aria-label="More colors" className="mr-5">
            <svg viewBox="0 0 24 16" className="h-4 w-6" fill="none" aria-hidden="true">
              <path d="M2 2l10 11L22 2" stroke={W} strokeWidth="3.5" />
            </svg>
          </button>
          <button aria-label="Palette menu" className="-mr-3 flex h-14 w-[30px] items-center self-end rounded-[10px] border-2 border-[#1c1c1c] pl-1">
            <svg viewBox="0 0 24 24" className="size-6 shrink-0" aria-hidden="true">
              <path d="M0 0h24v4H0zM0 10h24v4H0zM0 20h24v4H0z" fill={W} />
            </svg>
          </button>
        </div>
      </div>

      <footer className="flex h-[60px] shrink-0 items-start pt-[2px]">
        <div className="-ml-[22px] w-[300px] shrink-0 leading-8">
          <div className="flex h-8">
            <span className="w-[77px] text-right">Fill:</span>
            <b className="ml-1">m</b>
            <i className="ml-7">None</i>
          </div>
          <div className="flex h-8">
            <span className="w-[77px] text-right">Stroke:</span>
            <b className="ml-1">m</b>
            <span className="mt-[2px] ml-2 h-8 w-[100px] rounded-md bg-black" />
            <span className="ml-[10px]">0.0200</span>
          </div>
        </div>
        <div className="flex h-[68px] w-full min-w-0 items-center">
          <label htmlFor="op" className="w-[29px] shrink-0 pb-1">O:</label>
          <Spin id="op" label="Opacity" value="100" className="h-full w-[143px]" pad="pl-3" plusOff />
          <span className="mb-1 ml-12 h-[26px] w-[6px] shrink-0 bg-[#4f7be0]" />
          <span className="ml-3 w-[218px] shrink-0 pb-1 whitespace-nowrap">kerfprÃ³fun v3_Sk...</span>
          <button aria-label="Hide layer" className="ml-[46px] pb-1">
            <svg viewBox="0 0 32 28" className="h-7 w-8" fill="none" aria-hidden="true">
              <path d="M16 1v6M5 4l4 6M27 4l-4 6" stroke={W} strokeWidth="3" />
              <ellipse cx="16" cy="18" rx="12.5" ry="8.5" stroke={W} strokeWidth="3" />
              <circle cx="16" cy="18" r="4.5" fill={W} />
            </svg>
          </button>
          <button aria-label="Unlock layer" className="ml-[43px] pb-1">
            <Svg>{icons.unlock}</Svg>
          </button>
          <div className="ml-[16px] h-[46px] w-[2px] shrink-0 bg-[#2e2e2e]" />
          <p className="ml-[15px] min-w-0 flex-1 pb-1 whitespace-nowrap">
            <b>Shift</b>: Add to selection; <b>Alt</b>: Select with touch-path, Cycle through objects, Forced Drag
          </p>
          <div className="h-[46px] w-[2px] shrink-0 bg-[#2e2e2e]" />
          <dl className="mr-5 ml-5 grid w-[128px] shrink-0 grid-cols-[auto_1fr] pb-[10px] leading-[26px]">
            <dt>X:</dt>
            <dd className="text-right">30,24</dd>
            <dt>Y:</dt>
            <dd className="text-right">1107,29</dd>
          </dl>
          <label htmlFor="zm" className="w-[22px] shrink-0 pb-1">Z:</label>
          <Spin id="zm" label="Zoom" value="1637%" className="h-full w-[187px]" pad="pl-2" step="w-[44px]" />
          <label htmlFor="rt" className="ml-5 w-6 shrink-0 pb-1">R:</label>
          <Spin id="rt" label="Rotation" value="0,00°" className="h-full w-[202px]" pad="pl-[26px]" step="w-[44px]" />
        </div>
      </footer>
    </div>
  );
}
